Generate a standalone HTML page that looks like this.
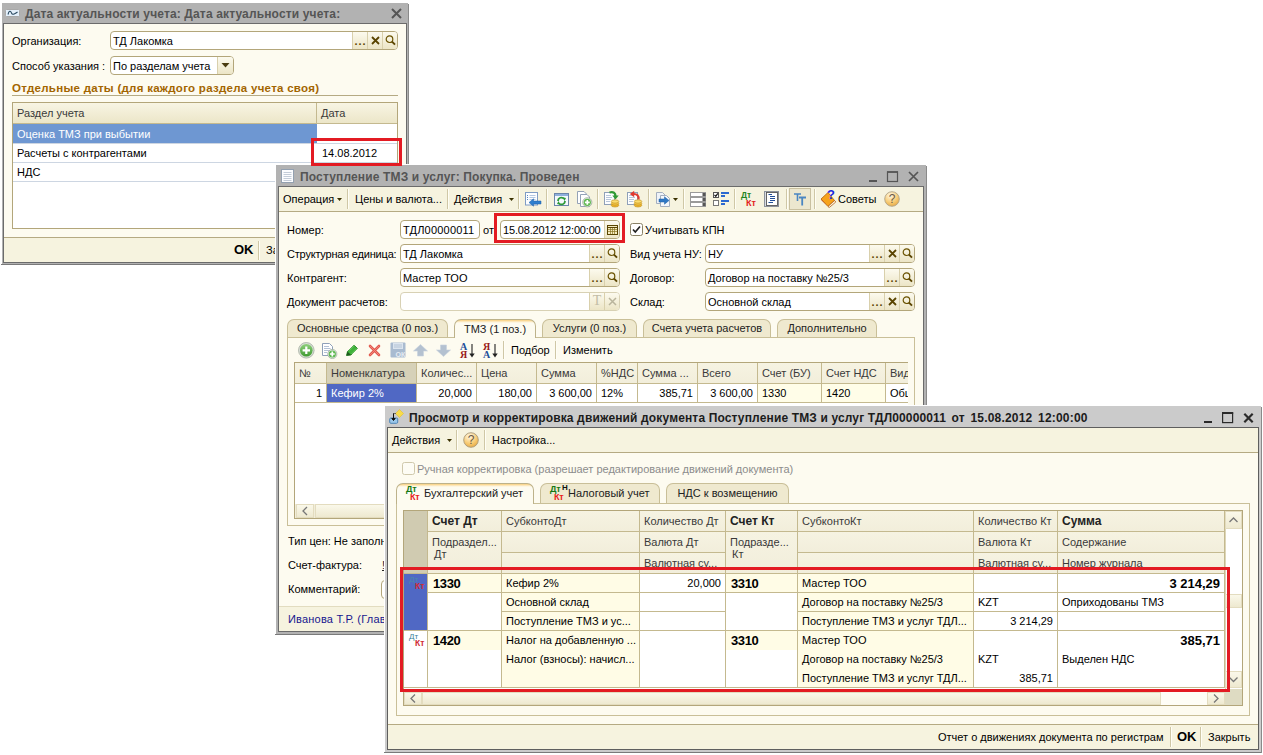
<!DOCTYPE html>
<html lang="ru">
<head>
<meta charset="utf-8">
<title>Дата актуальности учета</title>
<style>
html,body{margin:0;padding:0;background:#fff;}
body{width:1263px;height:755px;position:relative;overflow:hidden;font-family:"Liberation Sans",sans-serif;font-size:11px;color:#000;}
.a{position:absolute;white-space:nowrap;}
.layer{position:absolute;left:0;top:0;width:1263px;height:755px;}
.frame{position:absolute;background:#b2b2b2;}
.body{position:absolute;background:#fdfbf0;border:1px solid #6b6b6b;box-sizing:border-box;}
.ttl{position:absolute;line-height:18px;font-weight:bold;font-size:12px;color:#555;white-space:nowrap;letter-spacing:0.14px;}
.t{position:absolute;white-space:nowrap;line-height:14px;height:14px;}
.inp{position:absolute;background:#fff;border:1px solid #b3a67a;border-radius:4px;box-sizing:border-box;height:19px;overflow:hidden;}
.inp .v{position:absolute;left:2px;top:2px;line-height:15px;white-space:nowrap;}
.ib{position:absolute;top:0;bottom:0;width:15px;border-left:1px solid #d9d0ac;background:linear-gradient(#fcfaee,#ece5c6);box-sizing:border-box;text-align:center;line-height:15px;font-size:11px;}
.ib svg{display:block;margin:0 auto;}
.cmd{position:absolute;background:#f6f3df;}
.ln{position:absolute;background:#b5aa83;}
.sep{position:absolute;width:1px;background:#cfc7a6;box-shadow:1px 0 0 #fffef6;}
.hdr{position:absolute;background:linear-gradient(#f8f5e4,#ece6c8);border-right:1px solid #c4b98f;border-bottom:1px solid #c4b98f;box-sizing:border-box;color:#3a3a3a;overflow:hidden;}
.hdr span{position:absolute;left:4px;top:3px;line-height:14px;white-space:nowrap;}
.hdr.h3{background:linear-gradient(#f6f3e2,#f2eedb);}
.cell{position:absolute;box-sizing:border-box;border-right:1px solid #c4b98f;border-bottom:1px solid #c4b98f;background:#fff;overflow:hidden;}
.cell span{position:absolute;left:4px;top:2px;line-height:14px;white-space:nowrap;}
.cell span.r{left:auto;right:4px;}
.tab{position:absolute;box-sizing:border-box;border:1px solid #c9bf98;border-bottom:none;border-radius:7px 7px 0 0;background:#efe9cf;text-align:center;line-height:17px;white-space:nowrap;color:#222;}
.tab.on{background:linear-gradient(#f8cf7e 0,#fbdfa6 1px,#fdf0d2 2px,#fdfbf0 3px);line-height:18px;border-color:#bdb28a;}
.panel{position:absolute;box-sizing:border-box;border:1px solid #c9bf98;background:#fdfbf0;}
.red{position:absolute;border:3px solid #e31b23;box-sizing:border-box;}
.grid{position:absolute;background:#fff;border:1px solid #b3a67a;box-sizing:border-box;overflow:hidden;}
.sb{position:absolute;background:#f1edd9;}
.sbb{position:absolute;background:linear-gradient(#faf8ea,#eee9d0);border:1px solid #e3dcbf;box-sizing:border-box;}
.b{font-weight:bold;}
</style>
</head>
<body>

<!-- ================= WINDOW 1 ================= -->
<div class="layer" id="w1">
<div class="a" style="left:1px;top:2px;width:407px;height:262px;background:#fff;"></div>
<div class="frame" style="left:2px;top:3px;width:406px;height:261px;background:#b2b2b2;"></div>
<div class="a" style="left:1px;top:264px;width:408px;height:1px;background:#7a7a7a;"></div>
<div class="a" style="left:408px;top:4px;width:1px;height:261px;background:#8a8a8a;"></div>
<div class="body" style="left:3px;top:23px;width:404px;height:240px;"></div>
<svg class="a" style="left:5px;top:9px" width="15" height="8" viewBox="0 0 15 8"><rect x="0.5" y="0.5" width="14" height="7" rx="1" fill="#e4f0fb" stroke="#a9a9a9"/><path d="M3 5.5 C4 1.5 5.5 1.5 6.5 4 S9 5 12.5 3" fill="none" stroke="#27475f" stroke-width="1.1"/></svg>
<div class="ttl" style="left:25px;top:5px;">Дата актуальности учета: Дата актуальности учета:</div>
<svg class="a" style="left:391px;top:8px" width="11" height="11" viewBox="0 0 11 11"><path d="M1 1 L10 10 M10 1 L1 10" stroke="#555" stroke-width="2" fill="none"/></svg>
<div class="t " style="left:12px;top:34px;">Организация:</div>
<div class="inp" style="left:110px;top:31px;width:288px;"><span class="v">ТД Лакомка</span><div class="ib" style="right:30px;width:15px;"><span style="position:relative;top:2px;left:0.5px;letter-spacing:1px;font-weight:bold;color:#5a4500;">...</span></div><div class="ib" style="right:15px;width:15px;"><svg width="9" height="9" viewBox="0 0 9 9" style="margin-top:4px"><path d="M1 1 L8 8 M8 1 L1 8" stroke="#5a4400" stroke-width="1.8"/></svg></div><div class="ib" style="right:0px;width:15px;"><svg width="11" height="12" viewBox="0 0 11 12" style="margin-top:2px"><circle cx="4.5" cy="5.2" r="3.3" fill="none" stroke="#6a5200" stroke-width="1.2"/><path d="M7 7.7 L10 10.7" stroke="#5a4400" stroke-width="1.9"/></svg></div></div>
<div class="t " style="left:12px;top:59px;">Способ указания :</div>
<div class="inp" style="left:110px;top:56px;width:124px;"><span class="v">По разделам учета</span><div class="ib" style="right:0px;width:16px;"><svg width="9" height="5" viewBox="0 0 9 5" style="margin-top:6px"><path d="M0.5 0 L8.5 0 L4.5 4.5 Z" fill="#4a3c10"/></svg></div></div>
<div class="t " style="left:12px;top:81px;font-weight:bold;font-size:11.5px;color:#a36500;letter-spacing:0.28px;">Отдельные даты (для каждого раздела учета своя)</div>
<div class="ln" style="left:12px;top:95px;width:386px;height:1px;"></div>
<div class="grid" style="left:12px;top:102px;width:386px;height:127px;">
 <div class="hdr" style="left:0;top:0;width:304px;height:21px;"><span>Раздел учета</span></div>
 <div class="hdr" style="left:304px;top:0;width:80px;height:21px;border-right:none;"><span>Дата</span></div>
 <div class="a" style="left:0;top:21px;width:304px;height:19px;background:#6e97d2;color:#fff;"><span class="t" style="left:4px;top:3px;">Оценка ТМЗ при выбытии</span></div>
 <div class="a" style="left:0;top:40px;width:384px;height:1px;background:#cdd6e2;"></div>
 <div class="t" style="left:4px;top:43px;">Расчеты с контрагентами</div>
 <div class="a" style="left:0;top:59px;width:384px;height:1px;background:#cdd6e2;"></div>
 <div class="t" style="left:4px;top:62px;">НДС</div>
 <div class="a" style="left:0;top:78px;width:384px;height:1px;background:#cdd6e2;"></div>
 <div class="t" style="left:309px;top:43px;">14.08.2012</div>
</div>
<div class="ln" style="left:4px;top:237px;width:402px;height:1px;"></div>
<div class="cmd" style="left:4px;top:238px;width:402px;height:24px;"></div>
<div class="t " style="left:234px;top:243px;font-weight:bold;font-size:13px;">OK</div>
<div class="sep" style="left:258px;top:241px;height:19px;"></div>
<div class="t " style="left:266px;top:243px;">Записать</div>
</div>
<!-- ================= WINDOW 2 ================= -->
<div class="layer" id="w2">
<div class="a" style="left:275px;top:164px;width:651px;height:470px;background:#fff;"></div>
<div class="frame" style="left:276px;top:165px;width:650px;height:469px;background:#b2b2b2;"></div>
<div class="a" style="left:275px;top:634px;width:652px;height:1px;background:#7a7a7a;"></div>
<div class="a" style="left:926px;top:166px;width:1px;height:469px;background:#8a8a8a;"></div>
<div class="body" style="left:278px;top:186px;width:646px;height:446px;"></div>
<svg class="a" style="left:281px;top:169px" width="13" height="14" viewBox="0 0 13 14"><rect x="0.5" y="0.5" width="12" height="13" fill="#fbfcfe" stroke="#93a0b0"/><path d="M2.5 3.5 H10.5 M2.5 5.5 H10.5 M2.5 7.5 H10.5 M2.5 9.5 H10.5 M2.5 11.5 H10.5" stroke="#c3ccd8" stroke-width="1"/></svg>
<div class="ttl" style="left:300px;top:168px;">Поступление ТМЗ и услуг: Покупка. Проведен</div>
<svg class="a" style="left:868px;top:170px" width="52" height="14" viewBox="0 0 52 14"><path d="M1 11 H9" stroke="#555" stroke-width="2"/><rect x="19.5" y="2" width="10" height="9.5" fill="none" stroke="#555" stroke-width="1.2"/><path d="M19 2 H30" stroke="#555" stroke-width="1.6"/><path d="M41 2 L50 11 M50 2 L41 11" stroke="#555" stroke-width="1.7"/></svg>
<div class="cmd" style="left:279px;top:187px;width:644px;height:24px;"></div>
<div class="ln" style="left:279px;top:211px;width:644px;height:1px;"></div>
<div class="t " style="left:283px;top:192px;">Операция</div>
<svg class="a" style="left:337px;top:198px" width="5" height="3" viewBox="0 0 5 3"><path d="M0 0 H5 L2.5 3 Z" fill="#3a3000"/></svg>
<div class="sep" style="left:347px;top:189px;height:20px;"></div>
<div class="t " style="left:355px;top:192px;">Цены и валюта...</div>
<div class="sep" style="left:447px;top:189px;height:20px;"></div>
<div class="t " style="left:454px;top:192px;">Действия</div>
<svg class="a" style="left:509px;top:198px" width="5" height="3" viewBox="0 0 5 3"><path d="M0 0 H5 L2.5 3 Z" fill="#3a3000"/></svg>
<div class="sep" style="left:518px;top:189px;height:20px;"></div>
<svg class="a" style="left:524px;top:191px" width="18" height="17" viewBox="0 0 18 17"><rect x="1.5" y="1.5" width="12" height="12.5" fill="#fdfeff" stroke="#7f9cc4"/><path d="M3 4.5 H4 M3 6.5 H4 M3 8.5 H4" stroke="#5a86c0"/><path d="M5.5 4.5 H11.5 M5.5 6.5 H11.5 M5.5 8.5 H11.5" stroke="#b4c8e2"/><path d="M5 11.5 L9.5 7.8 V10 H17 V13 H9.5 V15.2 Z" fill="#2f7fcf" stroke="#1d5ea6" stroke-width="0.5"/></svg>
<div class="sep" style="left:546px;top:189px;height:20px;"></div>
<svg class="a" style="left:554px;top:193px" width="15" height="13" viewBox="0 0 15 13"><rect x="0.5" y="0.5" width="14" height="12" fill="#f4f8fd" stroke="#6c86aa"/><rect x="1" y="1" width="13" height="2" fill="#8fb0dc"/><path d="M4 8 A3.4 3.4 0 0 1 10 5.8" fill="none" stroke="#2e9a3a" stroke-width="1.7"/><path d="M11 8 A3.4 3.4 0 0 1 5 10.2" fill="none" stroke="#2e9a3a" stroke-width="1.7"/><path d="M8.6 4.2 L12 5 L10.5 8 Z M6.4 11.8 L3 11 L4.5 8 Z" fill="#2e9a3a"/></svg>
<svg class="a" style="left:576px;top:190px" width="17" height="18" viewBox="0 0 17 18"><path d="M1.5 1.5 H8 L10.5 4 V13.5 H1.5 Z" fill="#fff" stroke="#94a2b6"/><path d="M4.5 4.5 H11 L13.5 7 V16.5 H4.5 Z" fill="#fff" stroke="#94a2b6"/><circle cx="11.3" cy="12.3" r="4.6" fill="#e8efe6" stroke="#9aa89a" stroke-width="0.8"/><circle cx="11.3" cy="12.3" r="3.6" fill="#5cb84e"/><path d="M8.9 12.3 H13.7 M11.3 9.9 V14.7" stroke="#fff" stroke-width="1.7"/></svg>
<div class="sep" style="left:597px;top:189px;height:20px;"></div>
<svg class="a" style="left:603px;top:190px" width="18" height="18" viewBox="0 0 18 18"><rect x="1.5" y="2.5" width="10" height="12" fill="#fdfeff" stroke="#8fa0b8"/><path d="M3 5.5 H8 M3 7.5 H9 M3 9.5 H8 M3 11.5 H7" stroke="#b8c6da"/><path d="M6.5 2.5 C10.5 1.5 12.5 3 12.5 6" stroke="#2f9a34" stroke-width="2.2" fill="none"/><path d="M9.3 5.5 H15.7 L12.5 9.5 Z" fill="#2f9a34"/><ellipse cx="12" cy="15.3" rx="3.8" ry="1.7" fill="#f2b82e" stroke="#b98a1a" stroke-width="0.6"/><ellipse cx="12" cy="13.4" rx="3.8" ry="1.7" fill="#f7c84a" stroke="#b98a1a" stroke-width="0.6"/><ellipse cx="12" cy="11.5" rx="3.8" ry="1.7" fill="#fbdc70" stroke="#b98a1a" stroke-width="0.6"/></svg>
<svg class="a" style="left:626px;top:190px" width="18" height="18" viewBox="0 0 18 18"><rect x="1.5" y="2.5" width="10" height="12" fill="#fdfeff" stroke="#8fa0b8"/><path d="M3 5.5 H8 M3 7.5 H9 M3 9.5 H8 M3 11.5 H7" stroke="#b8c6da"/><path d="M12.5 9.5 C13 5.5 11 3.8 7.5 4" stroke="#e03a30" stroke-width="2.2" fill="none"/><path d="M8.2 0.8 V7.2 L3.8 4 Z" fill="#e03a30"/><ellipse cx="12" cy="15.3" rx="3.8" ry="1.7" fill="#f2b82e" stroke="#b98a1a" stroke-width="0.6"/><ellipse cx="12" cy="13.4" rx="3.8" ry="1.7" fill="#f7c84a" stroke="#b98a1a" stroke-width="0.6"/><ellipse cx="12" cy="11.5" rx="3.8" ry="1.7" fill="#fbdc70" stroke="#b98a1a" stroke-width="0.6"/></svg>
<div class="sep" style="left:648px;top:189px;height:20px;"></div>
<svg class="a" style="left:655px;top:191px" width="17" height="17" viewBox="0 0 17 17"><path d="M1.5 1.5 H7.5 L10.5 4.5 V12.5 H1.5 Z" fill="#eef2f8" stroke="#a3aebe"/><path d="M5.5 4.5 H11.5 L14.5 7.5 V15.5 H5.5 Z" fill="#f4f7fb" stroke="#a3aebe"/><path d="M4 8 H9.5 V5.8 L14 9.5 L9.5 13.2 V11 H4 Z" fill="#2f78c4" stroke="#1d5ea6" stroke-width="0.5"/></svg>
<svg class="a" style="left:673px;top:198px" width="5" height="3" viewBox="0 0 5 3"><path d="M0 0 H5 L2.5 3 Z" fill="#3a3000"/></svg>
<div class="sep" style="left:683px;top:189px;height:20px;"></div>
<svg class="a" style="left:690px;top:191px" width="16" height="16" viewBox="0 0 16 16"><rect x="0.5" y="1.5" width="15" height="4" fill="#fff" stroke="#9a9a9a"/><rect x="0.5" y="6.5" width="15" height="4" fill="#fff" stroke="#9a9a9a"/><rect x="0.5" y="11.5" width="15" height="4" fill="#fff" stroke="#9a9a9a"/><rect x="12.5" y="2" width="3" height="3" fill="#555"/><rect x="12.5" y="7" width="3" height="3" fill="#555"/><rect x="12.5" y="12" width="3" height="3" fill="#555"/></svg>
<svg class="a" style="left:713px;top:191px" width="17" height="16" viewBox="0 0 17 16"><rect x="0.5" y="1.5" width="5" height="5" fill="#fff" stroke="#555"/><path d="M1.5 3.8 L2.8 5.3 L4.8 2.4" stroke="#111" stroke-width="1.2" fill="none"/><rect x="0.5" y="9.5" width="5" height="5" fill="#fff" stroke="#777"/><path d="M8 2 H16 M8 5 H12 M8 10 H16 M8 13 H12" stroke="#2b68d0" stroke-width="2"/></svg>
<div class="sep" style="left:734px;top:189px;height:20px;"></div>
<div class="a" style="left:741px;top:191px;font-size:8.5px;line-height:9px;font-weight:bold;color:#1f861f;">Дт</div>
<div class="a" style="left:746px;top:198px;font-size:9px;line-height:10px;font-weight:bold;color:#e3201c;">Кт</div>
<svg class="a" style="left:764px;top:191px" width="15" height="16" viewBox="0 0 15 16"><rect x="0.5" y="0.5" width="14" height="15" fill="#d9dde4" stroke="#8c929c"/><rect x="2.5" y="1.5" width="11" height="13" fill="#fff" stroke="#555" stroke-width="0.9"/><path d="M4.5 3.5 H8 M6 5.5 H11 M6 7.5 H11 M6 9.5 H11 M4.5 11.5 H9" stroke="#234f98"/></svg>
<div class="sep" style="left:786px;top:189px;height:20px;"></div>
<div class="a" style="left:789px;top:188px;width:22px;height:22px;box-sizing:border-box;background:#ece7cf;border:1px solid #c9c0a0;"></div>
<svg class="a" style="left:793px;top:192px" width="14" height="14" viewBox="0 0 14 14"><path d="M1 2 H8 M4.5 2 V9" stroke="#4a86c2" stroke-width="1.6"/><path d="M6 5.5 H13 M9.2 5.5 V13.5" stroke="#4a86c2" stroke-width="1.8"/></svg>
<div class="sep" style="left:814px;top:189px;height:20px;"></div>
<svg class="a" style="left:820px;top:189px" width="17" height="19" viewBox="0 0 17 19"><path d="M1 10 L8 3.5 L14.5 11.5 L8 17.5 Z" fill="#f6a31c" stroke="#b5610b" stroke-width="0.8"/><path d="M8 17.5 L14.5 11.5 L15.8 13 L9.2 18.6 Z" fill="#fff3d8" stroke="#a8500a" stroke-width="0.7"/><path d="M1 10 L8 17.5 L9.2 18.6 L1.6 11.4 Z" fill="#c0420c"/></svg>
<div class="a" style="left:827px;top:188px;font-size:13px;line-height:13px;font-weight:bold;color:#1a28e0;">?</div>
<div class="t " style="left:838px;top:192px;">Советы</div>
<svg class="a" style="left:884px;top:191px" width="16" height="16" viewBox="0 0 16 16"><defs><radialGradient id="hg" cx="0.4" cy="0.25" r="0.85"><stop offset="0" stop-color="#fff8e4"/><stop offset="0.55" stop-color="#f8cd78"/><stop offset="1" stop-color="#e3a23a"/></radialGradient></defs><circle cx="8" cy="8" r="7.3" fill="url(#hg)" stroke="#b0a48a" stroke-width="0.9"/><text x="8" y="12.2" text-anchor="middle" font-family="Liberation Sans" font-size="12" fill="#6a5846">?</text></svg>
<div class="t " style="left:287px;top:223px;">Номер:</div>
<div class="inp" style="left:400px;top:220px;width:80px;"><span class="v"><span style="letter-spacing:0.2px">ТДЛ00000011</span></span></div>
<div class="t " style="left:483px;top:223px;">от</div>
<div class="inp" style="left:500px;top:220px;width:120px;"><span class="v"><span style="letter-spacing:-0.18px">15.08.2012 12:00:00</span></span><div class="ib" style="right:0px;width:15px;"><svg width="11" height="11" viewBox="0 0 11 11" style="margin-top:3px"><rect x="0.5" y="1.5" width="10" height="9" fill="#f6ecc0" stroke="#5a4500" stroke-width="1"/><path d="M0.5 3.5 H10.5" stroke="#5a4500" stroke-width="1"/><path d="M1 5.5 H10 M1 7.5 H10 M3.5 4 V10 M5.5 4 V10 M7.5 4 V10" stroke="#8a7420" stroke-width="0.7"/></svg></div></div>
<svg class="a" style="left:630px;top:223px" width="13" height="13" viewBox="0 0 13 13"><rect x="0.5" y="0.5" width="12" height="12" rx="2" fill="#fff" stroke="#8a8266"/><path d="M3 6.5 L5.3 9 L10 3.5" stroke="#222" stroke-width="1.7" fill="none"/></svg>
<div class="t " style="left:645px;top:223px;">Учитывать КПН</div>
<div class="t " style="left:287px;top:247px;letter-spacing:-0.2px;">Структурная единица:</div>
<div class="inp" style="left:400px;top:244px;width:220px;"><span class="v">ТД Лакомка</span><div class="ib" style="right:15px;width:15px;"><span style="position:relative;top:2px;left:0.5px;letter-spacing:1px;font-weight:bold;color:#5a4500;">...</span></div><div class="ib" style="right:0px;width:15px;"><svg width="11" height="12" viewBox="0 0 11 12" style="margin-top:2px"><circle cx="4.5" cy="5.2" r="3.3" fill="none" stroke="#6a5200" stroke-width="1.2"/><path d="M7 7.7 L10 10.7" stroke="#5a4400" stroke-width="1.9"/></svg></div></div>
<div class="t " style="left:630px;top:247px;">Вид учета НУ:</div>
<div class="inp" style="left:705px;top:244px;width:210px;"><span class="v">НУ</span><div class="ib" style="right:30px;width:15px;"><span style="position:relative;top:2px;left:0.5px;letter-spacing:1px;font-weight:bold;color:#5a4500;">...</span></div><div class="ib" style="right:15px;width:15px;"><svg width="9" height="9" viewBox="0 0 9 9" style="margin-top:4px"><path d="M1 1 L8 8 M8 1 L1 8" stroke="#5a4400" stroke-width="1.8"/></svg></div><div class="ib" style="right:0px;width:15px;"><svg width="11" height="12" viewBox="0 0 11 12" style="margin-top:2px"><circle cx="4.5" cy="5.2" r="3.3" fill="none" stroke="#6a5200" stroke-width="1.2"/><path d="M7 7.7 L10 10.7" stroke="#5a4400" stroke-width="1.9"/></svg></div></div>
<div class="t " style="left:287px;top:271px;">Контрагент:</div>
<div class="inp" style="left:400px;top:268px;width:220px;"><span class="v">Мастер ТОО</span><div class="ib" style="right:15px;width:15px;"><span style="position:relative;top:2px;left:0.5px;letter-spacing:1px;font-weight:bold;color:#5a4500;">...</span></div><div class="ib" style="right:0px;width:15px;"><svg width="11" height="12" viewBox="0 0 11 12" style="margin-top:2px"><circle cx="4.5" cy="5.2" r="3.3" fill="none" stroke="#6a5200" stroke-width="1.2"/><path d="M7 7.7 L10 10.7" stroke="#5a4400" stroke-width="1.9"/></svg></div></div>
<div class="t " style="left:630px;top:271px;">Договор:</div>
<div class="inp" style="left:705px;top:268px;width:210px;"><span class="v">Договор на поставку №25/3</span><div class="ib" style="right:15px;width:15px;"><span style="position:relative;top:2px;left:0.5px;letter-spacing:1px;font-weight:bold;color:#5a4500;">...</span></div><div class="ib" style="right:0px;width:15px;"><svg width="11" height="12" viewBox="0 0 11 12" style="margin-top:2px"><circle cx="4.5" cy="5.2" r="3.3" fill="none" stroke="#6a5200" stroke-width="1.2"/><path d="M7 7.7 L10 10.7" stroke="#5a4400" stroke-width="1.9"/></svg></div></div>
<div class="t " style="left:287px;top:295px;">Документ расчетов:</div>
<div class="inp" style="left:400px;top:292px;width:220px;border-color:#d8d1b4;"><span class="v"></span><div class="ib" style="right:15px;width:15px;"><span style="font-family:'Liberation Serif',serif;font-size:14px;color:#c2bda6;position:relative;top:0px;">T</span></div><div class="ib" style="right:0px;width:15px;"><svg width="9" height="9" viewBox="0 0 9 9" style="margin-top:4px"><path d="M1 1 L8 8 M8 1 L1 8" stroke="#b9b49c" stroke-width="1.5"/></svg></div></div>
<div class="t " style="left:630px;top:295px;">Склад:</div>
<div class="inp" style="left:705px;top:292px;width:210px;"><span class="v">Основной склад</span><div class="ib" style="right:30px;width:15px;"><span style="position:relative;top:2px;left:0.5px;letter-spacing:1px;font-weight:bold;color:#5a4500;">...</span></div><div class="ib" style="right:15px;width:15px;"><svg width="9" height="9" viewBox="0 0 9 9" style="margin-top:4px"><path d="M1 1 L8 8 M8 1 L1 8" stroke="#5a4400" stroke-width="1.8"/></svg></div><div class="ib" style="right:0px;width:15px;"><svg width="11" height="12" viewBox="0 0 11 12" style="margin-top:2px"><circle cx="4.5" cy="5.2" r="3.3" fill="none" stroke="#6a5200" stroke-width="1.2"/><path d="M7 7.7 L10 10.7" stroke="#5a4400" stroke-width="1.9"/></svg></div></div>
<div class="panel" style="left:287px;top:337px;width:628px;height:189px;"></div>
<div class="tab" style="left:287px;top:319px;width:161px;height:18px;">Основные средства (0 поз.)</div>
<div class="tab on" style="left:454px;top:319px;width:82px;height:19px;">ТМЗ (1 поз.)</div>
<div class="tab" style="left:542px;top:319px;width:95px;height:18px;">Услуги (0 поз.)</div>
<div class="tab" style="left:643px;top:319px;width:128px;height:18px;">Счета учета расчетов</div>
<div class="tab" style="left:777px;top:319px;width:100px;height:18px;">Дополнительно</div>
<svg class="a" style="left:298px;top:342px" width="17" height="17" viewBox="0 0 17 17"><defs><linearGradient id="gg" x1="0" y1="0" x2="0" y2="1"><stop offset="0" stop-color="#8fd07c"/><stop offset="1" stop-color="#3f9a30"/></linearGradient></defs><circle cx="8.3" cy="8.3" r="7.8" fill="#d9ded6" stroke="#9aa596" stroke-width="0.7"/><circle cx="8.3" cy="8.3" r="6.3" fill="url(#gg)"/><path d="M4.6 8.3 H12 M8.3 4.6 V12" stroke="#fff" stroke-width="2.2"/></svg>
<svg class="a" style="left:322px;top:343px" width="16" height="16" viewBox="0 0 16 16"><path d="M0.5 0.5 H7.5 L10.5 3.5 V12.5 H0.5 Z" fill="#fff" stroke="#8fa0b8"/><path d="M2 3.5 H7 M2 5.5 H8.5 M2 7.5 H8.5 M2 9.5 H5" stroke="#b4c2d6"/><circle cx="10.3" cy="11" r="4.6" fill="#e4ebe2" stroke="#9aa89a" stroke-width="0.7"/><circle cx="10.3" cy="11" r="3.6" fill="#5cb84e"/><path d="M7.9 11 H12.7 M10.3 8.6 V13.4" stroke="#fff" stroke-width="1.7"/></svg>
<svg class="a" style="left:345px;top:343px" width="14" height="14" viewBox="0 0 14 14"><path d="M1.5 12.5 L2.5 8.5 L9 2 L12.5 5.5 L6 12 Z" fill="#3fb23a" stroke="#1f7a1c" stroke-width="0.8"/><path d="M4 7.5 L9.7 1.8 M6.7 11 L12.3 5.4" stroke="#8fdc86" stroke-width="0.8"/><path d="M1.5 12.5 L2.5 8.5 L6 12 Z" fill="#1f5a1c"/></svg>
<svg class="a" style="left:368px;top:344px" width="13" height="13" viewBox="0 0 13 13"><path d="M2 2 L11 11 M11 2 L2 11" stroke="#e2574c" stroke-width="2.6" stroke-linecap="round"/><path d="M2 2 L11 11 M11 2 L2 11" stroke="#f08a80" stroke-width="0.9" stroke-linecap="round"/></svg>
<svg class="a" style="left:390px;top:342px" width="16" height="16" viewBox="0 0 16 16"><rect x="0.5" y="0.5" width="15" height="15" rx="1" fill="#a9bbd0"/><rect x="3" y="1" width="10" height="6" fill="#dbe4ee"/><path d="M4 3 H12 M4 5 H12" stroke="#b4c4d6"/><text x="5.5" y="14.5" font-family="Liberation Sans" font-weight="bold" font-size="7" fill="#e6ecf3">ОК</text></svg>
<svg class="a" style="left:413px;top:344px" width="15" height="13" viewBox="0 0 15 13"><path d="M7.5 0.5 L14.5 7 H10.5 V12 H4.5 V7 H0.5 Z" fill="#b4c1d0" stroke="#c8d2de" stroke-width="0.6"/></svg>
<svg class="a" style="left:436px;top:344px" width="15" height="13" viewBox="0 0 15 13"><path d="M7.5 12.5 L14.5 6 H10.5 V1 H4.5 V6 H0.5 Z" fill="#b4c1d0" stroke="#c8d2de" stroke-width="0.6"/></svg>
<div class="a" style="left:460px;top:342px;font-family:'Liberation Serif',serif;font-weight:bold;font-size:10px;line-height:9px;color:#1f4f9a;">А</div>
<div class="a" style="left:460px;top:350px;font-family:'Liberation Serif',serif;font-weight:bold;font-size:10px;line-height:9px;color:#9a1a1a;">Я</div>
<svg class="a" style="left:469px;top:344px" width="6" height="14" viewBox="0 0 6 14"><path d="M3 0 V11" stroke="#222" stroke-width="1.1"/><path d="M0.3 9.5 H5.7 L3 13.5 Z" fill="#222"/></svg>
<div class="a" style="left:483px;top:342px;font-family:'Liberation Serif',serif;font-weight:bold;font-size:10px;line-height:9px;color:#9a1a1a;">Я</div>
<div class="a" style="left:483px;top:350px;font-family:'Liberation Serif',serif;font-weight:bold;font-size:10px;line-height:9px;color:#1f4f9a;">А</div>
<svg class="a" style="left:492px;top:344px" width="6" height="14" viewBox="0 0 6 14"><path d="M3 0 V11" stroke="#222" stroke-width="1.1"/><path d="M0.3 9.5 H5.7 L3 13.5 Z" fill="#222"/></svg>
<div class="sep" style="left:503px;top:341px;height:18px;"></div>
<div class="t " style="left:511px;top:343px;">Подбор</div>
<div class="sep" style="left:555px;top:341px;height:18px;"></div>
<div class="t " style="left:563px;top:343px;">Изменить</div>
<div class="grid" style="left:294px;top:362px;width:614px;height:157px;border-right:none;">
 <div class="hdr h3" style="left:0px;top:0;width:32px;height:21px;"><span>№</span></div>
 <div class="cell" style="left:0px;top:21px;width:32px;height:19px;background:#fff;"><span class="r">1</span></div>
 <div class="hdr h3" style="left:32px;top:0;width:90px;height:21px;background:#d6d1b8;"><span>Номенклатура</span></div>
 <div class="cell" style="left:32px;top:21px;width:90px;height:19px;background:#5068c4;color:#fff;"><span class="">Кефир 2%</span></div>
 <div class="hdr h3" style="left:122px;top:0;width:60px;height:21px;"><span>Количес...</span></div>
 <div class="cell" style="left:122px;top:21px;width:60px;height:19px;background:#fff;"><span class="r">20,000</span></div>
 <div class="hdr h3" style="left:182px;top:0;width:60px;height:21px;"><span>Цена</span></div>
 <div class="cell" style="left:182px;top:21px;width:60px;height:19px;background:#fff;"><span class="r">180,00</span></div>
 <div class="hdr h3" style="left:242px;top:0;width:60px;height:21px;"><span>Сумма</span></div>
 <div class="cell" style="left:242px;top:21px;width:60px;height:19px;background:#fff;"><span class="r">3 600,00</span></div>
 <div class="hdr h3" style="left:302px;top:0;width:41px;height:21px;"><span>%НДС</span></div>
 <div class="cell" style="left:302px;top:21px;width:41px;height:19px;background:#fff;"><span class="">12%</span></div>
 <div class="hdr h3" style="left:343px;top:0;width:60px;height:21px;"><span>Сумма ...</span></div>
 <div class="cell" style="left:343px;top:21px;width:60px;height:19px;background:#fff;"><span class="r">385,71</span></div>
 <div class="hdr h3" style="left:403px;top:0;width:60px;height:21px;"><span>Всего</span></div>
 <div class="cell" style="left:403px;top:21px;width:60px;height:19px;background:#fff;"><span class="r">3 600,00</span></div>
 <div class="hdr h3" style="left:463px;top:0;width:64px;height:21px;"><span>Счет (БУ)</span></div>
 <div class="cell" style="left:463px;top:21px;width:64px;height:19px;background:#fffde8;"><span class="">1330</span></div>
 <div class="hdr h3" style="left:527px;top:0;width:64px;height:21px;"><span>Счет НДС</span></div>
 <div class="cell" style="left:527px;top:21px;width:64px;height:19px;background:#fffde8;"><span class="">1420</span></div>
 <div class="hdr h3" style="left:591px;top:0;width:49px;height:21px;"><span>Вид</span></div>
 <div class="cell" style="left:591px;top:21px;width:49px;height:19px;background:#fff;"><span class="">Общая</span></div>
 <div class="sb" style="left:0;top:141px;width:613px;height:14px;"></div>
 <div class="sbb" style="left:1px;top:141px;width:18px;height:14px;"><svg width="16" height="12" viewBox="0 0 16 12"><path d="M10 2 L6 6 L10 10" stroke="#777" stroke-width="1.3" fill="none"/></svg></div>
 <div class="sbb" style="left:20px;top:141px;width:300px;height:14px;"></div>
</div>
<div class="t " style="left:288px;top:534px;">Тип цен: Не заполнено</div>
<div class="t " style="left:288px;top:558px;">Счет-фактура:</div>
<div class="t " style="left:382px;top:558px;text-decoration:underline;color:#222;">!</div>
<div class="t " style="left:288px;top:582px;">Комментарий:</div>
<div class="inp" style="left:381px;top:580px;width:300px;"><span class="v"></span></div>
<div class="ln" style="left:279px;top:606px;width:644px;height:1px;background:#e2dcc0;"></div>
<div class="cmd" style="left:279px;top:607px;width:644px;height:24px;"></div>
<div class="t " style="left:288px;top:612px;color:#16168e;letter-spacing:0.2px;">Иванова Т.Р. (Главный бухгалтер)</div>
</div>
<!-- ================= WINDOW 3 ================= -->
<div class="layer" id="w3">
<div class="a" style="left:384px;top:405px;width:877px;height:347px;background:#fff;"></div>
<div class="frame" style="left:385px;top:406px;width:876px;height:346px;background:#cbcbcb;"></div>
<div class="a" style="left:384px;top:752px;width:878px;height:1px;background:#7a7a7a;"></div>
<div class="a" style="left:1261px;top:407px;width:1px;height:346px;background:#8a8a8a;"></div>
<div class="body" style="left:387px;top:427px;width:872px;height:323px;border-color:#5e5e5e;"></div>
<svg class="a" style="left:389px;top:409px" width="16" height="15" viewBox="0 0 16 15"><path d="M10.5 0.5 L14.5 4.5 L10.5 8.5 L6.5 4.5 Z" fill="#f8dc4a" stroke="#e0c030" stroke-width="0.6"/><rect x="0.7" y="9" width="8" height="5.3" rx="1.2" fill="#9cc8ea" stroke="#4f86b8"/><path d="M4.5 4.5 V11 M2.8 9.5 L4.5 11.5 L6.2 9.5 Z" stroke="#111" stroke-width="1" fill="#111"/><path d="M4.5 4.5 H7" stroke="#111" stroke-width="1" stroke-dasharray="1 1"/></svg>
<div class="ttl" style="left:409px;top:409px;color:#1c1c1c;">Просмотр и корректировка движений документа Поступление ТМЗ и услуг ТДЛ00000011<span style="word-spacing:2px;letter-spacing:0.2px;"> от 15.08.2012 12:00:00</span></div>
<svg class="a" style="left:1203px;top:411px" width="52" height="14" viewBox="0 0 52 14"><path d="M1 11 H9" stroke="#2a2a2a" stroke-width="2"/><rect x="19.6" y="2" width="10" height="9.6" fill="none" stroke="#2a2a2a" stroke-width="1.2"/><path d="M19 2 H30.2" stroke="#2a2a2a" stroke-width="2"/><path d="M41.3 2.8 L49.7 11.2 M49.7 2.8 L41.3 11.2" stroke="#2a2a2a" stroke-width="2.2"/></svg>
<div class="cmd" style="left:388px;top:428px;width:870px;height:24px;"></div>
<div class="ln" style="left:388px;top:452px;width:870px;height:1px;"></div>
<div class="t " style="left:392px;top:433px;">Действия</div>
<svg class="a" style="left:447px;top:439px" width="5" height="3" viewBox="0 0 5 3"><path d="M0 0 H5 L2.5 3 Z" fill="#3a3000"/></svg>
<div class="sep" style="left:456px;top:430px;height:20px;"></div>
<svg class="a" style="left:463px;top:432px" width="16" height="16" viewBox="0 0 16 16"><circle cx="8" cy="8" r="7.3" fill="url(#hg)" stroke="#a99a7a" stroke-width="0.9"/><text x="8" y="12.2" text-anchor="middle" font-family="Liberation Sans" font-size="12" fill="#6a5846">?</text></svg>
<div class="sep" style="left:484px;top:430px;height:20px;"></div>
<div class="t " style="left:492px;top:433px;">Настройка...</div>
<svg class="a" style="left:402px;top:462px" width="13" height="13" viewBox="0 0 13 13"><rect x="0.5" y="0.5" width="12" height="12" rx="2" fill="#fdfcf4" stroke="#cfc8ab"/></svg>
<div class="t " style="left:417px;top:462px;color:#8c8c8c;">Ручная корректировка (разрешает редактирование движений документа)</div>
<div class="panel" style="left:396px;top:503px;width:854px;height:213px;"></div>
<div class="tab on" style="left:396px;top:483px;width:138px;height:21px;text-align:left;"><span style="position:absolute;left:27px;top:0px;line-height:19px;">Бухгалтерский учет</span></div>
<div class="tab" style="left:540px;top:483px;width:120px;height:20px;text-align:left;"><span style="position:absolute;left:27px;top:0px;line-height:18px;">Налоговый учет</span></div>
<div class="tab" style="left:666px;top:483px;width:123px;height:20px;line-height:18px;">НДС к возмещению</div>
<div class="a" style="left:406px;top:485px;font-size:9px;line-height:9px;font-weight:bold;color:#147814;letter-spacing:-0.2px;">Дт</div>
<div class="a" style="left:410px;top:493px;font-size:9px;line-height:9px;font-weight:bold;color:#e8201c;letter-spacing:-0.2px;">Кт</div>
<div class="a" style="left:550px;top:485px;font-size:9px;line-height:9px;font-weight:bold;color:#147814;letter-spacing:-0.2px;">Дт</div>
<div class="a" style="left:554px;top:493px;font-size:9px;line-height:9px;font-weight:bold;color:#e8201c;letter-spacing:-0.2px;">Кт</div>
<div class="a" style="left:562px;top:484px;font-size:8px;line-height:8px;font-weight:bold;color:#111;">Н</div>
<div class="grid" style="left:403px;top:510px;width:840px;height:196px;">
 <div class="a" style="left:0;top:0;width:24px;height:63px;background:#d0cbb1;border-right:1px solid #c4b98f;border-bottom:1px solid #c4b98f;box-sizing:border-box;"></div>
 <div class="hdr h3" style="left:24px;top:0;width:74px;height:21px;"><span style="font-size:12px;color:#222;"><b>Счет Дт</b></span></div>
 <div class="hdr h3" style="left:24px;top:21px;width:74px;height:42px;"><span>Подраздел...</span><span style="top:15px;left:6px;">Дт</span></div>
 <div class="hdr h3" style="left:98px;top:0;width:138px;height:21px;"><span style="">СубконтоДт</span></div>
 <div class="hdr h3" style="left:98px;top:21px;width:138px;height:21px;"><span></span></div>
 <div class="hdr h3" style="left:98px;top:42px;width:138px;height:21px;"><span></span></div>
 <div class="hdr h3" style="left:236px;top:0;width:86px;height:21px;"><span style="">Количество Дт</span></div>
 <div class="hdr h3" style="left:236px;top:21px;width:86px;height:21px;"><span>Валюта Дт</span></div>
 <div class="hdr h3" style="left:236px;top:42px;width:86px;height:21px;"><span>Валютная су...</span></div>
 <div class="hdr h3" style="left:322px;top:0;width:72px;height:21px;"><span style="font-size:12px;color:#222;"><b>Счет Кт</b></span></div>
 <div class="hdr h3" style="left:322px;top:21px;width:72px;height:42px;"><span>Подразде...</span><span style="top:15px;left:6px;">Кт</span></div>
 <div class="hdr h3" style="left:394px;top:0;width:176px;height:21px;"><span style="">СубконтоКт</span></div>
 <div class="hdr h3" style="left:394px;top:21px;width:176px;height:21px;"><span></span></div>
 <div class="hdr h3" style="left:394px;top:42px;width:176px;height:21px;"><span></span></div>
 <div class="hdr h3" style="left:570px;top:0;width:84px;height:21px;"><span style="">Количество Кт</span></div>
 <div class="hdr h3" style="left:570px;top:21px;width:84px;height:21px;"><span>Валюта Кт</span></div>
 <div class="hdr h3" style="left:570px;top:42px;width:84px;height:21px;"><span>Валютная су...</span></div>
 <div class="hdr h3" style="left:654px;top:0;width:167px;height:21px;"><span style="font-size:12px;color:#222;"><b>Сумма</b></span></div>
 <div class="hdr h3" style="left:654px;top:21px;width:167px;height:21px;"><span>Содержание</span></div>
 <div class="hdr h3" style="left:654px;top:42px;width:167px;height:21px;"><span>Номер журнала</span></div>
 <div class="cell" style="left:0;top:63px;width:24px;height:57px;background:#5068c4;"></div>
 <div class="cell" style="left:24px;top:63px;width:74px;height:57px;"><div class="a" style="left:0;top:0;right:0;height:19px;background:#fffce6;border-bottom:1px solid #c4b98f;box-sizing:border-box;"></div><span style="font-weight:bold;font-size:13px;top:3px;left:5px;letter-spacing:-0.4px;">1330</span></div>
 <div class="cell" style="left:322px;top:63px;width:72px;height:57px;"><div class="a" style="left:0;top:0;right:0;height:19px;background:#fffce6;border-bottom:1px solid #c4b98f;box-sizing:border-box;"></div><span style="font-weight:bold;font-size:13px;top:3px;left:5px;letter-spacing:-0.4px;">3310</span></div>
 <div class="cell" style="left:98px;top:63px;width:138px;height:19px;background:#fffce6;"><span>Кефир 2%</span></div>
 <div class="cell" style="left:236px;top:63px;width:86px;height:19px;"><span class="r">20,000</span></div>
 <div class="cell" style="left:394px;top:63px;width:176px;height:19px;background:#fffce6;"><span>Мастер ТОО</span></div>
 <div class="cell" style="left:570px;top:63px;width:84px;height:19px;"><span class=""></span></div>
 <div class="cell" style="left:654px;top:63px;width:167px;height:19px;"><span class="r" style="font-size:13px;top:3px;"><b>3 214,29</b></span></div>
 <div class="cell" style="left:98px;top:82px;width:138px;height:19px;background:#fffce6;"><span>Основной склад</span></div>
 <div class="cell" style="left:236px;top:82px;width:86px;height:19px;"><span class="r"></span></div>
 <div class="cell" style="left:394px;top:82px;width:176px;height:19px;background:#fffce6;"><span>Договор на поставку №25/3</span></div>
 <div class="cell" style="left:570px;top:82px;width:84px;height:19px;"><span class="">KZT</span></div>
 <div class="cell" style="left:654px;top:82px;width:167px;height:19px;"><span class="" style="">Оприходованы ТМЗ</span></div>
 <div class="cell" style="left:98px;top:101px;width:138px;height:19px;background:#fffce6;"><span>Поступление ТМЗ и ус...</span></div>
 <div class="cell" style="left:236px;top:101px;width:86px;height:19px;"><span class="r"></span></div>
 <div class="cell" style="left:394px;top:101px;width:176px;height:19px;background:#fffce6;"><span>Поступление ТМЗ и услуг ТДЛ...</span></div>
 <div class="cell" style="left:570px;top:101px;width:84px;height:19px;"><span class="r">3 214,29</span></div>
 <div class="cell" style="left:654px;top:101px;width:167px;height:19px;"><span class="" style=""></span></div>
 <div class="cell" style="left:0;top:120px;width:24px;height:57px;background:#fff;"></div>
 <div class="cell" style="left:24px;top:120px;width:74px;height:57px;"><div class="a" style="left:0;top:0;right:0;height:19px;background:#fffce6;"></div><span style="font-weight:bold;font-size:13px;top:3px;left:5px;letter-spacing:-0.4px;">1420</span></div>
 <div class="cell" style="left:322px;top:120px;width:72px;height:57px;"><div class="a" style="left:0;top:0;right:0;height:19px;background:#fffce6;"></div><span style="font-weight:bold;font-size:13px;top:3px;left:5px;letter-spacing:-0.4px;">3310</span></div>
 <div class="cell" style="left:98px;top:120px;width:138px;height:19px;background:#fffce6;border-bottom:none;"><span>Налог на добавленную ...</span></div>
 <div class="cell" style="left:236px;top:120px;width:86px;height:19px;border-bottom:none;"><span class="r"></span></div>
 <div class="cell" style="left:394px;top:120px;width:176px;height:19px;background:#fffce6;border-bottom:none;"><span>Мастер ТОО</span></div>
 <div class="cell" style="left:570px;top:120px;width:84px;height:19px;border-bottom:none;"><span class=""></span></div>
 <div class="cell" style="left:654px;top:120px;width:167px;height:19px;border-bottom:none;"><span class="r" style="font-size:13px;top:3px;"><b>385,71</b></span></div>
 <div class="cell" style="left:98px;top:139px;width:138px;height:19px;background:#fffce6;border-bottom:none;"><span>Налог (взносы): начисл...</span></div>
 <div class="cell" style="left:236px;top:139px;width:86px;height:19px;border-bottom:none;"><span class="r"></span></div>
 <div class="cell" style="left:394px;top:139px;width:176px;height:19px;background:#fffce6;border-bottom:none;"><span>Договор на поставку №25/3</span></div>
 <div class="cell" style="left:570px;top:139px;width:84px;height:19px;border-bottom:none;"><span class="">KZT</span></div>
 <div class="cell" style="left:654px;top:139px;width:167px;height:19px;border-bottom:none;"><span class="" style="">Выделен НДС</span></div>
 <div class="cell" style="left:98px;top:158px;width:138px;height:19px;background:#fffce6;"><span></span></div>
 <div class="cell" style="left:236px;top:158px;width:86px;height:19px;"><span class="r"></span></div>
 <div class="cell" style="left:394px;top:158px;width:176px;height:19px;background:#fffce6;"><span>Поступление ТМЗ и услуг ТДЛ...</span></div>
 <div class="cell" style="left:570px;top:158px;width:84px;height:19px;"><span class="r">385,71</span></div>
 <div class="cell" style="left:654px;top:158px;width:167px;height:19px;"><span class="" style=""></span></div>
 <div class="sb" style="left:821px;top:0;width:17px;height:178px;background:#fff;border-left:1px solid #ddd6b8;box-sizing:border-box;"></div>
 <div class="sbb" style="left:821px;top:0;width:17px;height:18px;"><svg width="15" height="16" viewBox="0 0 15 16"><path d="M3.5 10 L7.5 6 L11.5 10" stroke="#777" stroke-width="1.3" fill="none"/></svg></div>
 <div class="sbb" style="left:821px;top:83px;width:17px;height:14px;"></div>
 <div class="sbb" style="left:821px;top:160px;width:17px;height:17px;"><svg width="15" height="15" viewBox="0 0 15 15"><path d="M3.5 5.5 L7.5 9.5 L11.5 5.5" stroke="#777" stroke-width="1.3" fill="none"/></svg></div>
 <div class="sb" style="left:0;top:181px;width:821px;height:13px;background:#fefdf6;"></div>
 <div class="sbb" style="left:0;top:181px;width:18px;height:13px;"><svg width="16" height="11" viewBox="0 0 16 11"><path d="M10 1.5 L6 5.5 L10 9.5" stroke="#777" stroke-width="1.3" fill="none"/></svg></div>
 <div class="sbb" style="left:18px;top:181px;width:739px;height:13px;"></div>
 <div class="sbb" style="left:803px;top:181px;width:18px;height:13px;"><svg width="16" height="11" viewBox="0 0 16 11"><path d="M6 1.5 L10 5.5 L6 9.5" stroke="#777" stroke-width="1.3" fill="none"/></svg></div>
 <div class="a" style="left:821px;top:178px;width:17px;height:16px;background:#dedbc2;"></div>
</div>
<div class="a" style="left:409px;top:576px;font-size:8px;line-height:8px;color:#4a8aa8;">Дт</div>
<div class="a" style="left:415px;top:582px;font-size:8.5px;line-height:9px;font-weight:bold;color:#d02a34;">Кт</div>
<div class="a" style="left:409px;top:633px;font-size:8px;line-height:8px;color:#3a7f9a;">Дт</div>
<div class="a" style="left:415px;top:639px;font-size:8.5px;line-height:9px;font-weight:bold;color:#d02a34;">Кт</div>
<div class="ln" style="left:388px;top:724px;width:870px;height:1px;"></div>
<div class="cmd" style="left:388px;top:725px;width:870px;height:24px;"></div>
<div class="t " style="left:938px;top:730px;">Отчет о движениях документа по регистрам</div>
<div class="sep" style="left:1170px;top:727px;height:20px;"></div>
<div class="t " style="left:1177px;top:730px;font-weight:bold;font-size:13px;">OK</div>
<div class="sep" style="left:1200px;top:727px;height:20px;"></div>
<div class="t " style="left:1208px;top:730px;">Закрыть</div>
</div>
<!-- annotations -->
<div class="red" style="left:311px;top:138px;width:91px;height:28px;"></div>
<div class="red" style="left:494px;top:213px;width:131px;height:30px;"></div>
<div class="red" style="left:400px;top:567px;width:830px;height:125px;"></div>
</body>
</html>
